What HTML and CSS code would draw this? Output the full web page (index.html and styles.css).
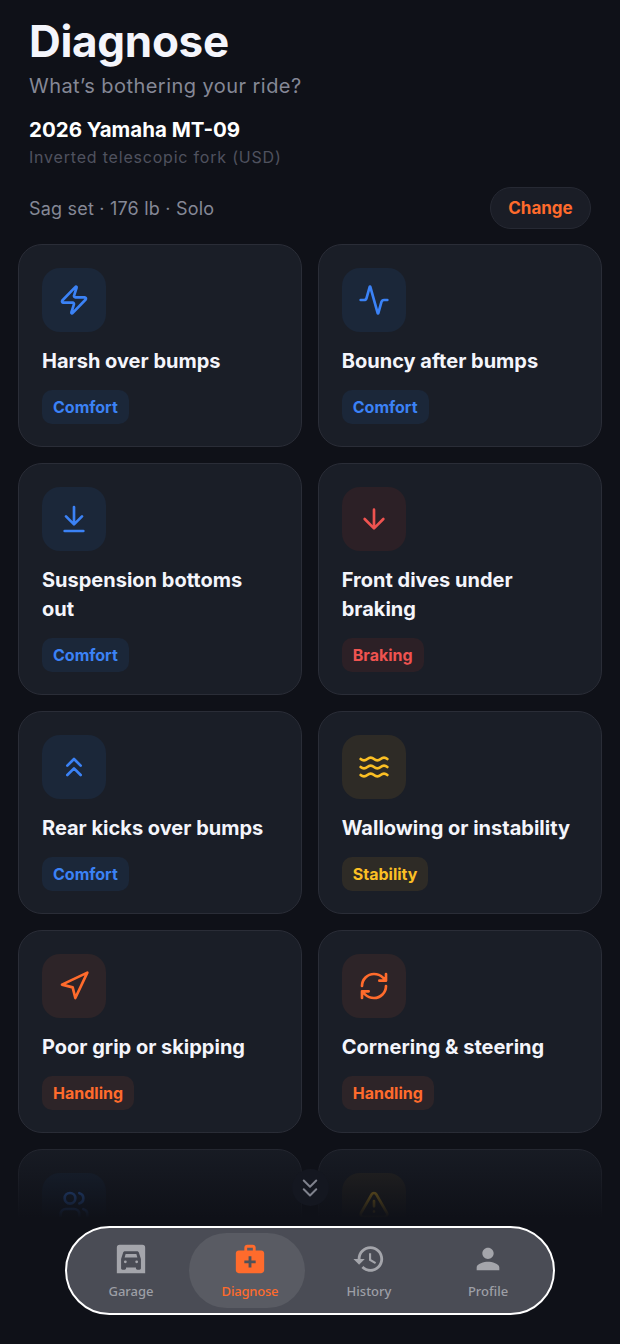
FILE: index.html
```html
<!DOCTYPE html>
<html lang="en">
<head>
    <meta charset="UTF-8">
    <meta name="viewport" content="width=device-width, initial-scale=1.0">
    <title>Diagnose</title>
    <link rel="stylesheet" href="styles.css">
</head>
<body>
    <div class="page">
        <header class="head">
            <h1 class="head-title">Diagnose</h1>
            <p class="head-sub">What’s bothering your ride?</p>
            <h2 class="bike-name">2026 Yamaha MT-09</h2>
            <p class="bike-fork">Inverted telescopic fork (USD)</p>
            <div class="sag-row">
                <span class="sag-text">Sag set · 176 lb · Solo</span>
                <button class="change-btn">Change</button>
            </div>
        </header>

        <main class="grid">
            <div class="card">
                <div class="card-icon blue">
                    <svg viewBox="0 0 24 24"><path d="M4 14a1 1 0 0 1-.78-1.63l9.900-10.200a.5.5 0 0 1 .86.46l-1.920 6.020A1 1 0 0 0 13 10h7a1 1 0 0 1 .78 1.630l-9.900 10.200a.5.5 0 0 1-.86-.46l1.920-6.020A1 1 0 0 0 11 14z"/></svg>
                </div>
                <h3 class="card-title">Harsh over bumps</h3>
                <span class="chip blue">Comfort</span>
            </div>
            <div class="card">
                <div class="card-icon blue">
                    <svg viewBox="0 0 24 24"><path d="M22 12h-2.480a2 2 0 0 0-1.930 1.460l-2.350 8.360a.25.25 0 0 1-.48 0L9.240 2.180a.25.25 0 0 0-.48 0l-2.350 8.360A2 2 0 0 1 4.490 12H2"/></svg>
                </div>
                <h3 class="card-title">Bouncy after bumps</h3>
                <span class="chip blue">Comfort</span>
            </div>
            <div class="card">
                <div class="card-icon blue">
                    <svg viewBox="0 0 24 24"><path d="M12 3v13M6 10l6 6 6-6M5 21h14"/></svg>
                </div>
                <h3 class="card-title">Suspension bottoms out</h3>
                <span class="chip blue">Comfort</span>
            </div>
            <div class="card">
                <div class="card-icon red">
                    <svg viewBox="0 0 24 24"><path d="M12 5v14M5 12l7 7 7-7"/></svg>
                </div>
                <h3 class="card-title">Front dives under braking</h3>
                <span class="chip red">Braking</span>
            </div>
            <div class="card">
                <div class="card-icon blue">
                    <svg viewBox="0 0 24 24"><path d="M17 11l-5-5-5 5M17 18l-5-5-5 5"/></svg>
                </div>
                <h3 class="card-title">Rear kicks over bumps</h3>
                <span class="chip blue">Comfort</span>
            </div>
            <div class="card">
                <div class="card-icon yellow">
                    <svg viewBox="0 0 24 24"><path d="M2 6c.6.5 1.200 1 2.500 1C7 7 7 5 9.500 5c2.600 0 2.400 2 5 2 2.500 0 2.500-2 5-2 1.300 0 1.900.5 2.500 1M2 12c.6.5 1.200 1 2.500 1 2.500 0 2.500-2 5-2 2.600 0 2.400 2 5 2 2.500 0 2.500-2 5-2 1.300 0 1.900.5 2.500 1M2 18c.6.5 1.200 1 2.500 1 2.500 0 2.500-2 5-2 2.600 0 2.400 2 5 2 2.500 0 2.500-2 5-2 1.300 0 1.900.5 2.500 1"/></svg>
                </div>
                <h3 class="card-title">Wallowing or instability</h3>
                <span class="chip yellow">Stability</span>
            </div>
            <div class="card">
                <div class="card-icon orange">
                    <svg viewBox="0 0 24 24"><path d="M3 11l19-9-9 19-2-8z"/></svg>
                </div>
                <h3 class="card-title">Poor grip or skipping</h3>
                <span class="chip orange">Handling</span>
            </div>
            <div class="card">
                <div class="card-icon orange">
                    <svg viewBox="0 0 24 24"><path d="M3 12a9 9 0 0 1 9-9 9.750 9.750 0 0 1 6.740 2.740L21 8M21 3v5h-5M21 12a9 9 0 0 1-9 9 9.750 9.750 0 0 1-6.740-2.740L3 16M8 16H3v5"/></svg>
                </div>
                <h3 class="card-title">Cornering &amp; steering</h3>
                <span class="chip orange">Handling</span>
            </div>
            <div class="card">
                <div class="card-icon blue">
                    <svg viewBox="0 0 24 24"><path d="M16 21v-2a4 4 0 0 0-4-4H6a4 4 0 0 0-4 4v2"/><circle cx="9" cy="7" r="4"/><path d="M22 21v-2a4 4 0 0 0-3-3.870M16 3.130a4 4 0 0 1 0 7.750"/></svg>
                </div>
            </div>
            <div class="card">
                <div class="card-icon yellow">
                    <svg viewBox="0 0 24 24"><path d="M21.730 18l-8-14a2 2 0 0 0-3.480 0l-8 14A2 2 0 0 0 4 21h16a2 2 0 0 0 1.730-3M12 9v4M12 17h.01"/></svg>
                </div>
            </div>
        </main>
    </div>

    <!-- list fades out behind the tab bar -->
    <div class="fade"></div>

    <div class="scroll-hint">
        <svg viewBox="0 0 24 24"><path d="M7 6l5 5 5-5M7 13l5 5 5-5"/></svg>
    </div>

    <nav class="tabbar">
        <a class="tab">
            <svg viewBox="0 0 24 24"><path fill-rule="evenodd" d="M4 2h16a2 2 0 0 1 2 2v18H2V4a2 2 0 0 1 2-2zM7.800 6.500c-.7 0-1.200.4-1.400 1L5 12v6.500c0 .6.400 1 1 1h1.500c.6 0 1-.4 1-1V18h7v.5c0 .6.400 1 1 1H18c.6 0 1-.4 1-1V12l-1.400-4.500c-.2-.6-.7-1-1.400-1zM7.500 11l.7-2.500h7.600l.7 2.500zM8 13a1 1 0 1 1 0 2 1 1 0 0 1 0-2zm8 0a1 1 0 1 1 0 2 1 1 0 0 1 0-2z"/></svg>
            <span>Garage</span>
        </a>
        <a class="tab active">
            <svg viewBox="0 0 24 24"><path d="M20 6h-4V4c0-1.100-.9-2-2-2h-4c-1.100 0-2 .9-2 2v2H4c-1.100 0-2 .9-2 2v12c0 1.100.9 2 2 2h16c1.100 0 2-.9 2-2V8c0-1.100-.9-2-2-2zM10 4h4v2h-4V4z"/><path class="plus" d="M16 15h-3v3h-2v-3H8v-2h3v-3h2v3h3v2z"/></svg>
            <span>Diagnose</span>
        </a>
        <a class="tab">
            <svg viewBox="0 0 24 24"><path d="M13 3c-4.970 0-9 4.030-9 9H1l3.890 3.890.07.14L9 12H6c0-3.870 3.130-7 7-7s7 3.130 7 7-3.130 7-7 7c-1.930 0-3.680-.79-4.940-2.060l-1.420 1.420C8.270 19.990 10.510 21 13 21c4.970 0 9-4.030 9-9s-4.030-9-9-9zm-1 5v5l4.280 2.540.72-1.210-3.500-2.080V8H12z"/></svg>
            <span>History</span>
        </a>
        <a class="tab">
            <svg viewBox="0 0 24 24"><path d="M12 12c2.210 0 4-1.790 4-4s-1.790-4-4-4-4 1.790-4 4 1.790 4 4 4zm0 2c-2.670 0-8 1.340-8 4v2h16v-2c0-2.660-5.330-4-8-4z"/></svg>
            <span>Profile</span>
        </a>
    </nav>
</body>
</html>
```

FILE: styles.css
```css
html, body {
    margin: 0;
    padding: 0;
    height: 1344px;
    overflow: hidden;
    background-color: #0f1118;
    font-family: "Inter", "Liberation Sans", sans-serif;
}

.page {
    height: 1344px;
    overflow: hidden;
}

.head {
    padding: 14px 29px 0 29px;
}

.head-title {
    margin: 0;
    font-size: 44px;
    line-height: 54px;
    font-weight: 700;
    letter-spacing: -0.3px;
    color: #f4f5fb;
}

.head-sub {
    margin: 4px 0 0 0;
    font-size: 20px;
    line-height: 28px;
    letter-spacing: 0.45px;
    color: #858896;
}

.bike-name {
    margin: 16px 0 0 0;
    font-size: 20.5px;
    line-height: 28px;
    font-weight: 700;
    color: #ffffff;
}

.bike-fork {
    margin: 1px 0 0 0;
    font-size: 16px;
    line-height: 24px;
    letter-spacing: 0.8px;
    color: #4f525f;
}

.sag-row {
    display: flex;
    justify-content: space-between;
    align-items: center;
    margin: 18px 0 0 0;
}

.sag-text {
    font-size: 18px;
    letter-spacing: 0.2px;
    color: #858896;
}

.change-btn {
    height: 42px;
    width: 101px;
    border: 1px solid #262933;
    border-radius: 21px;
    background-color: #1a1d26;
    color: #ff6b2c;
    font-family: inherit;
    font-size: 17px;
    font-weight: 700;
}

.grid {
    display: grid;
    grid-template-columns: 1fr 1fr;
    column-gap: 15.5px;
    row-gap: 16px;
    padding: 15px 18px 0 18px;
}

.card {
    box-sizing: border-box;
    padding: 23px 23px 22px 23px;
    border: 1px solid #2a2d37;
    border-radius: 24px;
    background-color: #1a1e27;
    display: flex;
    flex-direction: column;
    align-items: flex-start;
}

.card-icon {
    width: 64px;
    height: 64px;
    border-radius: 18px;
    display: flex;
    align-items: center;
    justify-content: center;
}

.card-icon svg {
    width: 32px;
    height: 32px;
    fill: none;
    stroke: currentColor;
    stroke-width: 2;
    stroke-linecap: round;
    stroke-linejoin: round;
}

.card-title {
    margin: 15px 0 14px 0;
    max-width: 232px;
    font-size: 20px;
    line-height: 29px;
    font-weight: 700;
    color: #f4f5fb;
}

.chip {
    padding: 0 11px;
    height: 34px;
    line-height: 34px;
    border-radius: 10px;
    font-size: 16px;
    font-weight: 700;
}

.blue {
    color: #3b82f6;
    background-color: #1b2739;
}

.red {
    color: #ef5350;
    background-color: #2c2026;
}

.yellow {
    color: #fbbf24;
    background-color: #2e2b26;
}

.orange {
    color: #ff6b2c;
    background-color: #2d2428;
}

.fade {
    position: absolute;
    left: 0;
    right: 0;
    top: 1130px;
    height: 214px;
    background: linear-gradient(to bottom, rgba(15, 17, 24, 0), rgba(15, 17, 24, 0.7) 28%, #0f1118 41%);
}

.scroll-hint {
    position: absolute;
    left: 291.5px;
    top: 1169px;
    width: 37px;
    height: 37px;
    border-radius: 50%;
    background-color: #141720;
    display: flex;
    align-items: center;
    justify-content: center;
}

.scroll-hint svg {
    width: 30px;
    height: 30px;
    fill: none;
    stroke: #7f828d;
    stroke-width: 1.6;
    stroke-linecap: round;
    stroke-linejoin: round;
}

.tabbar {
    position: absolute;
    left: 65px;
    top: 1226px;
    box-sizing: border-box;
    width: 490px;
    height: 89px;
    padding: 5px 4.5px;
    border: 2px solid #ffffff;
    border-radius: 45px;
    background-color: #4a4c55;
    display: grid;
    grid-template-columns: repeat(4, 119px);
}

.tab {
    position: relative;
    display: flex;
    flex-direction: column;
    align-items: center;
    padding-top: 9px;
    font-family: "Noto Sans", sans-serif;
    font-size: 13px;
    font-weight: 500;
    color: #9d9fa6;
}

.tab svg {
    position: relative;
    width: 34px;
    height: 34px;
    margin-bottom: 6px;
    fill: #a4a5ab;
}

.tab span {
    position: relative;
}

/* the highlight sits a little left of the tab's own center */
.tab.active::before {
    content: "";
    position: absolute;
    left: -1.5px;
    top: 0;
    bottom: 0;
    width: 116px;
    border-radius: 38px;
    background-color: #595b63;
}

.tab.active {
    color: #ff6b2c;
    letter-spacing: -0.2px;
}

.tab.active svg {
    fill: #ff6b2c;
}

.tab.active .plus {
    fill: #4f5158;
}
```
